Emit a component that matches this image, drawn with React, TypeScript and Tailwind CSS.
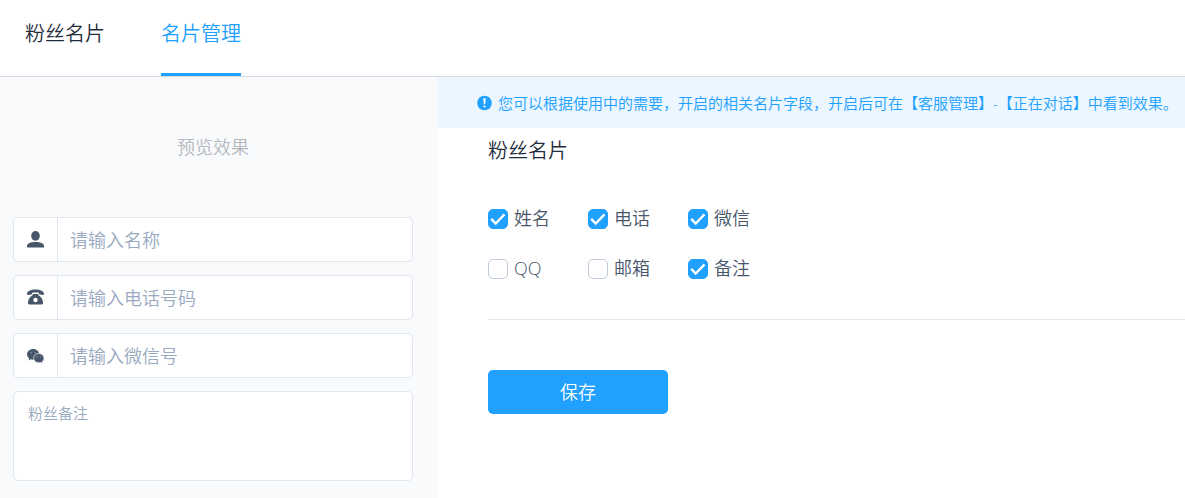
import { useState } from "react";
import type { ReactNode } from "react";

type Field = {
  id: string;
  label: string;
  enabled: boolean;
};

const initialFields: Field[] = [
  { id: "name", label: "姓名", enabled: true },
  { id: "phone", label: "电话", enabled: true },
  { id: "wechat", label: "微信", enabled: true },
  { id: "qq", label: "QQ", enabled: false },
  { id: "email", label: "邮箱", enabled: false },
  { id: "remark", label: "备注", enabled: true },
];

function UserIcon() {
  return (
    <svg viewBox="0 0 18 18" className="size-[17px] fill-[#475669]" aria-hidden="true">
      <ellipse cx="9" cy="5.100" rx="4.600" ry="5.100" />
      <path d="M0 17.500v-1.900c0-2.400 4-4 9-4s9 1.600 9 4v1.900z" />
    </svg>
  );
}

function PhoneIcon() {
  return (
    <svg viewBox="0 0 18 18" className="size-[17px] fill-[#475669]" aria-hidden="true">
      <path d="M0 5.400C0 2.200 4 .6 9 .6s9 1.600 9 4.800c0 .6-.4.900-.9.900l-3.600-.4c-.5-.1-.8-.4-.8-.9V4C11.500 3.600 6.500 3.600 5.300 4v1c0 .5-.3.800-.8.900l-3.600.4C.4 6.300 0 6 0 5.400z" />
      <path
        fillRule="evenodd"
        d="M6 5.400h6v1.200c2.700 1.500 4.800 4 5 7.800.1 1.300-.4 2.100-1.500 2.100h-13c-1.100 0-1.600-.8-1.500-2.100.2-3.800 2.300-6.300 5-7.800zM9 9.300a2.300 2.300 0 1 0 0 4.600 2.300 2.300 0 0 0 0-4.600z"
      />
    </svg>
  );
}

function WechatIcon() {
  return (
    <svg viewBox="0 0 18 18" className="size-[17px]" aria-hidden="true">
      <path
        fill="#475669"
        d="M6.500 2C3 2 0 4.600 0 7.800c0 1.800.9 3.400 2.300 4.400l-.6 2.100 2.500-1.200c.7.2 1.500.4 2.300.4 3.600 0 6.400-2.500 6.400-5.700S10.100 2 6.500 2z"
      />
      <path
        fill="#475669"
        stroke="#fff"
        strokeWidth=".7"
        d="M12.500 6.900c-3.100 0-5.500 2.200-5.500 4.900s2.400 4.900 5.500 4.900c.7 0 1.300-.1 1.900-.3l2.100.9-.5-1.700c1.300-.9 2-2.200 2-3.800 0-2.700-2.400-4.900-5.500-4.900z"
      />
      <g fill="#8d99a8">
        <circle cx="4.400" cy="6" r=".8" />
        <circle cx="8.600" cy="6" r=".8" />
        <circle cx="10.700" cy="10.400" r=".7" />
        <circle cx="14.300" cy="10.400" r=".7" />
      </g>
    </svg>
  );
}

function NoticeIcon() {
  return (
    <svg viewBox="0 0 16 16" className="size-4 shrink-0" aria-hidden="true">
      <circle cx="8.500" cy="8" r="7.300" fill="#20a0ff" />
      <path d="M7.300 3.200h2.400l-.5 6h-1.400z" fill="#fff" />
      <circle cx="8.500" cy="11.500" r="1.100" fill="#fff" />
    </svg>
  );
}

function PreviewInput({ icon, placeholder }: { icon: ReactNode; placeholder: string }) {
  return (
    <label className="flex h-[45px] overflow-hidden rounded-[5px] border border-[#e0e6ef] bg-white">
      <span className="flex w-11 shrink-0 items-center justify-center border-r border-[#e0e6ef]">
        {icon}
      </span>
      <input
        type="text"
        aria-label={placeholder}
        placeholder={placeholder}
        className="min-w-0 flex-1 px-3 text-lg outline-none placeholder:text-[#99a9bf]"
      />
    </label>
  );
}

function FieldCheckbox({ field, onToggle }: { field: Field; onToggle: () => void }) {
  return (
    <label className="flex cursor-pointer items-end gap-1.5 text-lg leading-[22px] text-[#475669]">
      <span className="grid size-5">
        <input
          type="checkbox"
          checked={field.enabled}
          onChange={onToggle}
          className="peer col-start-1 row-start-1 size-5 appearance-none rounded-[5px] border border-[#c0ccda] bg-white checked:border-[#20a0ff] checked:bg-[#20a0ff]"
        />
        <svg
          viewBox="0 0 20 20"
          className="pointer-events-none invisible col-start-1 row-start-1 size-5 peer-checked:visible"
          aria-hidden="true"
        >
          <path d="M3.200 9.900l4.500 4.600 8.800-9.100" fill="none" stroke="#fff" strokeWidth="2.300" />
        </svg>
      </span>
      {field.label}
    </label>
  );
}

export default function App() {
  const [fields, setFields] = useState(initialFields);

  const toggle = (id: string) =>
    setFields((prev) => prev.map((f) => (f.id === id ? { ...f, enabled: !f.enabled } : f)));

  return (
    <div className="flex min-h-screen flex-col bg-white font-['Open_Sans','Noto_Sans_CJK_SC',sans-serif] font-[350] text-[#1f2d3d]">
      <nav className="flex gap-14 border-b border-[#d3dce6] px-[25px] text-xl leading-7">
        <a href="#fans" className="border-b-3 border-transparent pt-5 pb-[25px]">
          粉丝名片
        </a>
        <a href="#manage" className="border-b-3 border-[#20a0ff] pt-5 pb-[25px] text-[#20a0ff]">
          名片管理
        </a>
      </nav>

      <div className="flex flex-1">
        <aside className="w-[438px] shrink-0 bg-[#f9fafc] pt-14 pr-[25px] pb-4 pl-[13px]">
          <h2 className="mb-14 text-center text-lg leading-7 text-[#b4b8bf]">预览效果</h2>
          <div className="flex flex-col gap-[13px]">
            <PreviewInput icon={<UserIcon />} placeholder="请输入名称" />
            <PreviewInput icon={<PhoneIcon />} placeholder="请输入电话号码" />
            <PreviewInput icon={<WechatIcon />} placeholder="请输入微信号" />
            <textarea
              aria-label="粉丝备注"
              placeholder="粉丝备注"
              className="h-[90px] resize-none rounded-[5px] border border-[#e0e6ef] bg-white px-3.5 py-[11px] text-[15px] leading-5 outline-none placeholder:text-[#99a9bf]"
            />
          </div>
        </aside>

        <main className="min-w-0 flex-1">
          <p className="flex min-h-[51px] items-center gap-1.5 bg-[#ebf6ff] pl-[38px] text-[15px] leading-5 text-[#20a0ff]">
            <NoticeIcon />
            您可以根据使用中的需要，开启的相关名片字段，开启后可在【客服管理】-【正在对话】中看到效果。
          </p>
          <form className="pt-[9px] pl-[50px]" onSubmit={(e) => e.preventDefault()}>
            <h2 className="text-xl leading-7">粉丝名片</h2>
            <div className="grid grid-cols-[repeat(3,100px)] gap-y-7 border-b border-[#e5e9f2] pt-[42px] pb-10">
              {fields.map((field) => (
                <FieldCheckbox key={field.id} field={field} onToggle={() => toggle(field.id)} />
              ))}
            </div>
            <button
              type="submit"
              className="mt-[50px] h-11 w-[180px] cursor-pointer rounded-[5px] bg-[#20a0ff] text-lg text-white"
            >
              保存
            </button>
          </form>
        </main>
      </div>
    </div>
  );
}
